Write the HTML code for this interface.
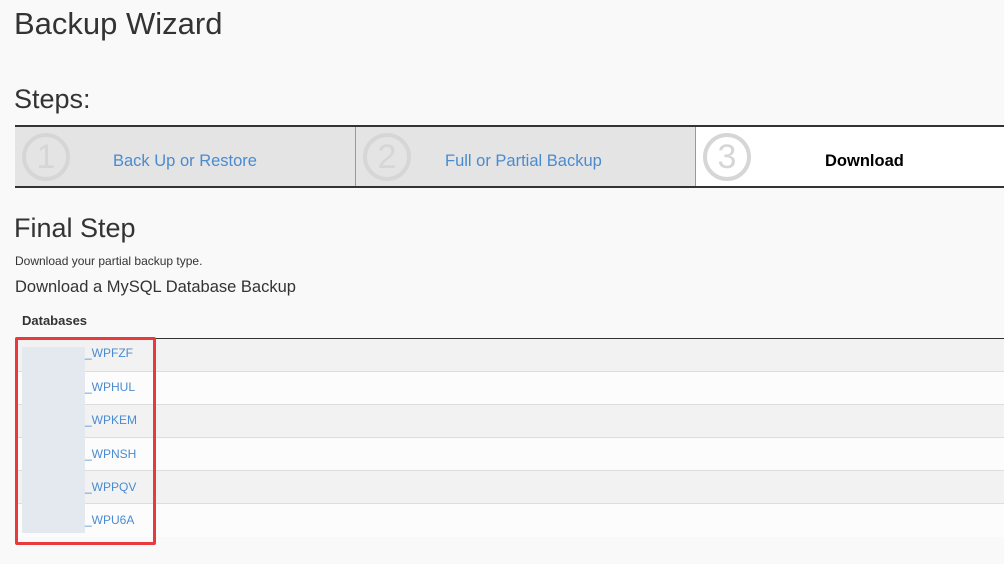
<!DOCTYPE html>
<html><head><meta charset="utf-8"><style>
*{margin:0;padding:0;box-sizing:border-box}
body{width:1004px;height:564px;background:#f9f9f9;font-family:"Liberation Sans",sans-serif;color:#333;position:relative;overflow:hidden}
.a{position:absolute;white-space:nowrap}
.lnk{color:#4a8bd0}
.row{position:absolute;left:15px;width:989px;height:33px;border-bottom:1px solid #ddd}
.circ{position:absolute;top:8px;width:48px;height:48px;border:4px solid #d6d6d6;border-radius:50%;color:#d6d6d6;font-size:34px;text-align:center;line-height:40px}
</style></head><body>
<div class="a" style="left:14px;top:6px;font-size:31px;color:#333">Backup Wizard</div>
<div class="a" style="left:14px;top:84px;font-size:27px;color:#333">Steps:</div>
<div class="a" style="left:15px;top:125px;width:989px;height:63px;border-top:2px solid #333;border-bottom:2px solid #333;background:#e4e4e4">
  <div class="a" style="left:340px;top:0;width:1px;height:59px;background:#999"></div>
  <div class="a" style="left:680px;top:0;width:309px;height:59px;background:#fff;border-left:1px solid #999"></div>
  <div class="circ" style="left:7px;top:6px">1</div>
  <div class="circ" style="left:348px;top:6px">2</div>
  <div class="circ" style="left:688px;top:6px">3</div>
  <div class="a lnk" style="left:98px;top:25px;font-size:16.5px">Back Up or Restore</div>
  <div class="a lnk" style="left:430px;top:25px;font-size:16.5px">Full or Partial Backup</div>
  <div class="a" style="left:810px;top:25px;font-size:16.5px;font-weight:bold;color:#000">Download</div>
</div>
<div class="a" style="left:14px;top:213px;font-size:27px;color:#333">Final Step</div>
<div class="a" style="left:15px;top:254px;font-size:12px;color:#333">Download your partial backup type.</div>
<div class="a" style="left:15px;top:278px;font-size:16.5px;color:#333">Download a MySQL Database Backup</div>
<div class="a" style="left:22px;top:313px;font-size:13px;font-weight:bold;color:#333">Databases</div>
<div class="a" style="left:15px;top:338px;width:989px;height:1px;background:#333"></div>
<div class="row" style="top:339px;background:#f2f2f2"></div>
<div class="row" style="top:372px;background:#fcfcfc"></div>
<div class="row" style="top:405px;background:#f2f2f2"></div>
<div class="row" style="top:438px;background:#fcfcfc"></div>
<div class="row" style="top:471px;background:#f2f2f2"></div>
<div class="row" style="top:504px;background:#fcfcfc;border-bottom:none"></div>
<div class="a" style="left:22px;top:347px;width:63px;height:186px;background:#e4e8ef"></div>
<div class="a lnk" style="left:85px;top:346px;font-size:12px">_WPFZF</div>
<div class="a lnk" style="left:85px;top:380px;font-size:12px">_WPHUL</div>
<div class="a lnk" style="left:85px;top:413px;font-size:12px">_WPKEM</div>
<div class="a lnk" style="left:85px;top:447px;font-size:12px">_WPNSH</div>
<div class="a lnk" style="left:85px;top:480px;font-size:12px">_WPPQV</div>
<div class="a lnk" style="left:85px;top:513px;font-size:12px">_WPU6A</div>
<div class="a" style="left:15px;top:337px;width:141px;height:208px;border:3px solid #e8393c;border-radius:2px"></div>
</body></html>
